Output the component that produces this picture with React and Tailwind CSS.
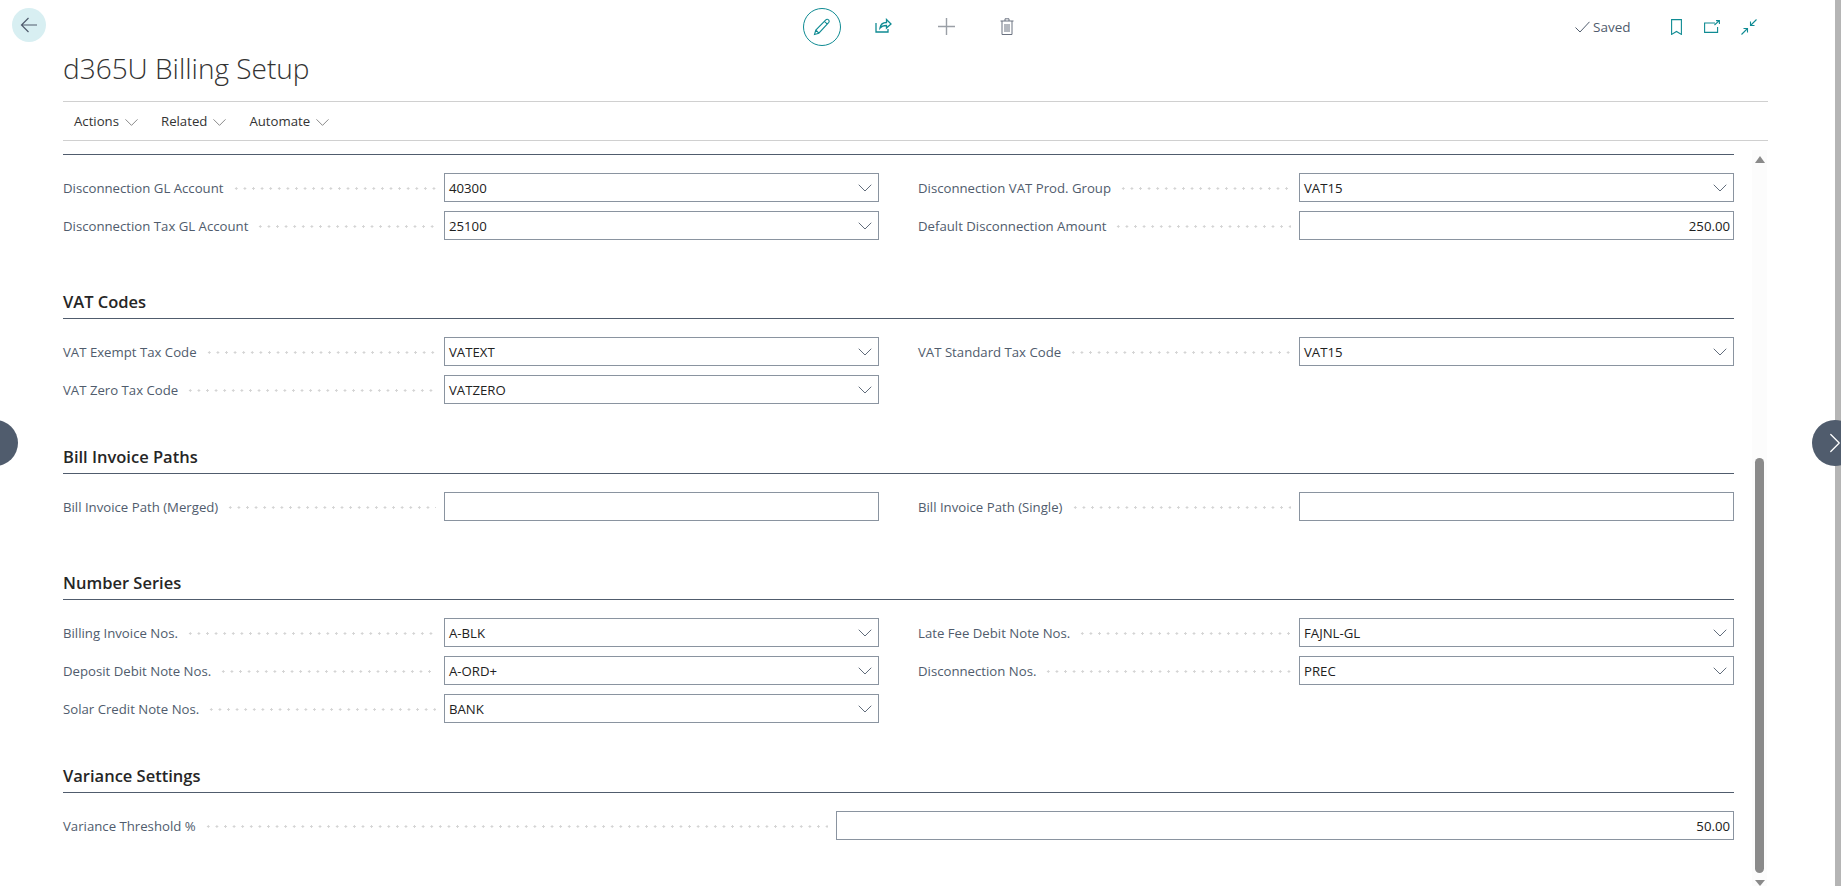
import React from "react";
import { ChevronDown, ChevronRight } from "lucide-react";

const sections = [
  {
    gap: "mt-0",
    title: null,
    rows: [
      [
        { label: "Disconnection GL Account", value: "40300", lookup: true },
        { label: "Disconnection VAT Prod. Group", value: "VAT15", lookup: true },
      ],
      [
        { label: "Disconnection Tax GL Account", value: "25100", lookup: true },
        { label: "Default Disconnection Amount", value: "250.00", right: true },
      ],
    ],
  },
  {
    gap: "mt-[42px]",
    title: "VAT Codes",
    rows: [
      [
        { label: "VAT Exempt Tax Code", value: "VATEXT", lookup: true },
        { label: "VAT Standard Tax Code", value: "VAT15", lookup: true },
      ],
      [{ label: "VAT Zero Tax Code", value: "VATZERO", lookup: true }],
    ],
  },
  {
    gap: "mt-[33px]",
    title: "Bill Invoice Paths",
    rows: [
      [
        { label: "Bill Invoice Path (Merged)", value: "" },
        { label: "Bill Invoice Path (Single)", value: "" },
      ],
    ],
  },
  {
    gap: "mt-[42px]",
    title: "Number Series",
    rows: [
      [
        { label: "Billing Invoice Nos.", value: "A-BLK", lookup: true },
        { label: "Late Fee Debit Note Nos.", value: "FAJNL-GL", lookup: true },
      ],
      [
        { label: "Deposit Debit Note Nos.", value: "A-ORD+", lookup: true },
        { label: "Disconnection Nos.", value: "PREC", lookup: true },
      ],
      [{ label: "Solar Credit Note Nos.", value: "BANK", lookup: true }],
    ],
  },
  {
    gap: "mt-[33px]",
    title: "Variance Settings",
    wide: { label: "Variance Threshold %", value: "50.00" },
  },
];

const Leader = () => (
  <span className="flex-1 h-[3px] mx-2 bg-[radial-gradient(circle,#d4d4d4_1px,transparent_1.2px)] bg-[length:8.6px_3px] bg-repeat-x" />
);

const Input = ({ value, lookup, right, className }) => (
  <div
    className={`h-[29px] flex items-center border border-[#8a94a0] bg-white pl-[4px] pr-[3px] pt-[2px] text-[#212121] ${className}`}
  >
    <span className={`flex-1 ${right ? "text-right" : ""}`}>{value}</span>
    {lookup && (
      <ChevronDown size={24} strokeWidth={0.9} className="text-[#505c6d] mr-[-2px] mt-[-2px]" />
    )}
  </div>
);

const Field = ({ label, value, lookup, right }) => (
  <div className="flex items-center w-[816px]">
    <div className="w-[381px] flex items-center pt-[2px]">
      <span className="text-[#505c6d] whitespace-nowrap">{label}</span>
      <Leader />
    </div>
    <Input value={value} lookup={lookup} right={right} className="w-[435px]" />
  </div>
);

const Section = ({ section }) => (
  <div className={section.gap}>
    {section.title && (
      <h3 className="h-[36px] flex items-end pb-[3px] text-[16.5px] font-semibold text-[#262626]">
        {section.title}
      </h3>
    )}
    <div className="border-t border-[#505c6d] pt-[18px] flex flex-col gap-[9px]">
      {section.rows &&
        section.rows.map((row, i) => (
          <div key={i} className="flex gap-[39px]">
            {row.map((f) => (
              <Field key={f.label} {...f} />
            ))}
          </div>
        ))}
      {section.wide && (
        <div className="flex items-center">
          <div className="w-[773px] flex items-center pt-[2px]">
            <span className="text-[#505c6d] whitespace-nowrap">{section.wide.label}</span>
            <Leader />
          </div>
          <Input value={section.wide.value} right className="flex-1" />
        </div>
      )}
    </div>
  </div>
);

const MenuItem = ({ label }) => (
  <button className="flex items-center gap-[1px] text-[#333]">
    {label}
    <ChevronDown size={23} strokeWidth={0.9} className="text-[#777]" />
  </button>
);

export default function App() {
  return (
    <div className="relative h-[886px] flex overflow-hidden bg-white text-[13.2px] font-['Open_Sans',sans-serif]">
      <div className="flex-1 min-w-0 flex flex-col">
        {/* top command bar */}
        <div className="h-[50px] flex items-start">
          <button className="mt-[8px] ml-[12px] w-[34px] h-[34px] rounded-full bg-[#d8eff2] flex items-center justify-center">
            <svg width="18" height="16" viewBox="0 0 18 16" fill="none" stroke="#505c6d" strokeWidth="1.2">
              <path d="M17 8H1.5M8.5 1 1.5 8l7 7" />
            </svg>
          </button>
          <button className="mt-[8px] ml-[757px] w-[38px] h-[38px] rounded-full border border-[#0f8b93] flex items-center justify-center">
            <svg width="18" height="18" viewBox="0 0 18 18" fill="none" stroke="#0f8b93" strokeWidth="1.1">
              <path d="M1.5 16.5 2.8 12 12.8 2a1.7 1.7 0 0 1 3 .2 1.8 1.8 0 0 1 0 2.2L5.8 15.2ZM2.8 12l3 3.2M11.5 3.3l3 3" />
            </svg>
          </button>
          <span className="mt-[18px] ml-[34px]">
            <svg width="17" height="15" viewBox="0 0 17 15" fill="none" stroke="#0f8b93" strokeWidth="1.3">
              <path d="M1 5v9h12v-3M5 10c.5-3.500 3-5.500 6.500-5.500V1.500L16 6l-4.500 4V7.500C8.500 7.500 6.500 8.200 5 10Z" />
            </svg>
          </span>
          <span className="mt-[18px] ml-[46px]">
            <svg width="17" height="17" viewBox="0 0 17 17" fill="none" stroke="#9a9fa6" strokeWidth="1.4">
              <path d="M8.500 0v17M0 8.500h17" />
            </svg>
          </span>
          <span className="mt-[18px] ml-[45px]">
            <svg width="14" height="17" viewBox="0 0 14 17" fill="none" stroke="#6b7280" strokeWidth="1">
              <path d="M.5 3h13M5 3V.8h4V3M2 3v13.500h10V3M5 6v8M7 6v8M9 6v8" />
            </svg>
          </span>
          <div className="mt-[17px] ml-[561px] flex items-center gap-[3px] text-[#505c6d] text-[13.5px]">
            <svg width="15" height="12" viewBox="0 0 15 12" fill="none" stroke="#505c6d" strokeWidth="1">
              <path d="M.5 6.500 5 11 14.500.8" />
            </svg>
            Saved
          </div>
          <span className="mt-[19px] ml-[40px]">
            <svg width="11" height="16" viewBox="0 0 11 16" fill="none" stroke="#0f8b93" strokeWidth="1.1">
              <path d="M.6.600h9.800v14.800L5.500 12.500.6 15.400Z" />
            </svg>
          </span>
          <span className="mt-[20px] ml-[22px]">
            <svg width="16" height="13" viewBox="0 0 16 13" fill="none" stroke="#0f8b93" strokeWidth="1.1">
              <path d="M11 3H.6v9.400h13V7M10.500 5 15 .8M12 .6h3.400V4" />
            </svg>
          </span>
          <span className="mt-[19px] ml-[21px]">
            <svg width="16" height="16" viewBox="0 0 16 16" fill="none" stroke="#0f8b93" strokeWidth="1.1">
              <path d="M15.500.5 9.500 6.500M9.500 2.500v4h4M.5 15.500l6-6M2.500 9.500h4v4" />
            </svg>
          </span>
        </div>

        <h1 className="ml-[63px] h-[51px] text-[28px] font-light leading-[36px] text-[#333]">
          d365U Billing Setup
        </h1>

        <div className="ml-[63px] w-[1705px] h-[40px] border-y border-[#d0d0d0] flex items-center gap-[18px] pl-[11px] pt-[2px]">
          <MenuItem label="Actions" />
          <MenuItem label="Related" />
          <MenuItem label="Automate" />
        </div>

        {/* scrolling form area */}
        <div className="flex flex-1 min-h-0 ml-[63px] pt-[13px]">
          <div className="w-[1671px]">
            {sections.map((s, i) => (
              <Section key={i} section={s} />
            ))}
          </div>
          <div className="ml-[18px] mt-[-4px] w-[15px] bg-[#fcfcfc] flex flex-col items-center">
            <span className="mt-[6px] w-0 h-0 border-x-[5px] border-x-transparent border-b-[7px] border-b-[#8a8a8a]" />
            <span className="mt-[295px] w-[9px] h-[415px] rounded-full bg-[#8a8a8a]" />
            <span className="mt-[7px] w-0 h-0 border-x-[5px] border-x-transparent border-t-[6px] border-t-[#8a8a8a]" />
          </div>
        </div>
      </div>

      {/* browser scrollbar */}
      <div className="ml-[68px] w-[6px] bg-[#b5b5b5]" />

      {/* record paging buttons */}
      <div className="absolute left-[-28px] top-[420px] w-[46px] h-[46px] rounded-full bg-[#505c6d]" />
      <div className="absolute right-[-17px] top-[420px] w-[46px] h-[46px] rounded-full bg-[#505c6d] flex items-center pl-[6px]">
        <ChevronRight size={34} strokeWidth={0.9} className="text-white shrink-0" />
      </div>
    </div>
  );
}
